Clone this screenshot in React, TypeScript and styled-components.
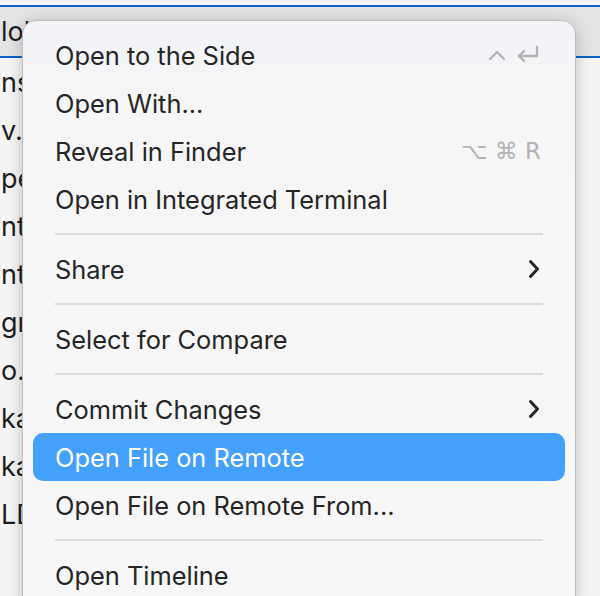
import React from "react";
import styled, { createGlobalStyle } from "styled-components";

// styles
const GlobalStyle = createGlobalStyle`
  html, body {
    margin: 0;
    padding: 0;
    background: #f4f4f4;
    font-family: Inter, "Noto Sans", "DejaVu Sans", sans-serif;
    -webkit-font-smoothing: antialiased;
  }
`;

const Screen = styled.div`
  position: relative;
  width: 600px;
  height: 596px;
  overflow: hidden;
  background: #f5f5f5;
  padding-top: 5px;
  box-sizing: border-box;
`;

const ExplorerRow = styled.div<{ $focused?: boolean }>`
  display: flex;
  align-items: center;
  height: ${(p) => (p.$focused ? "53px" : "48px")};
  padding-left: 1px;
  font-size: 27px;
  color: #1f1f1f;
  white-space: nowrap;
  box-sizing: border-box;
  background: ${(p) => (p.$focused ? "#e4e4e4" : "transparent")};
  border-top: ${(p) => (p.$focused ? "2px solid #0a63c7" : "none")};
  border-bottom: ${(p) => (p.$focused ? "2px solid #0a63c7" : "none")};
`;

const Menu = styled.div`
  position: absolute;
  top: 20px;
  left: 22px;
  width: 554px;
  padding: 10px 10px 10px;
  box-sizing: border-box;
  border-radius: 14px;
  border: 1px solid #bdbdbd;
  background: linear-gradient(180deg, #f1f3f7 0px, #f6f6f7 70px, #f7f7f7 100%);
  box-shadow: 0 0 14px rgba(0, 0, 0, 0.12), 0 6px 20px rgba(0, 0, 0, 0.1);
  font-family: Inter, "Noto Sans", "DejaVu Sans", sans-serif;
`;

const Item = styled.div<{ $active?: boolean }>`
  display: flex;
  align-items: center;
  justify-content: space-between;
  height: 48px;
  padding: 0 24px 0 22px;
  border-radius: 10px;
  font-size: 25.4px;
  color: ${(p) => (p.$active ? "#ffffff" : "#262626")};
  background: ${(p) => (p.$active ? "#44a0fd" : "transparent")};
`;

const Separator = styled.div`
  height: 22px;
  display: flex;
  align-items: center;
  padding: 0 22px 0 22px;

  &::after {
    content: "";
    flex: 1;
    height: 2px;
    background: #dcdcdc;
  }
`;

const Shortcut = styled.span`
  display: flex;
  align-items: center;
  gap: 8px;
  color: #b3b3b3;
  font-size: 23px;
  font-family: "DejaVu Sans", Inter, sans-serif;
`;

const Chevron = styled.svg`
  width: 12px;
  height: 20px;
  margin-right: 1px;
`;

// data
type Entry =
  | { kind: "item"; label: string; shortcut?: React.ReactNode; submenu?: boolean; active?: boolean }
  | { kind: "sep" };

const ReturnIcon = () => (
  <svg width="26" height="22" viewBox="0 0 26 22" fill="none" stroke="#b3b3b3" strokeWidth="2.4" strokeLinecap="round" strokeLinejoin="round">
    <path d="M22 3 V12 H4" />
    <path d="M9 7 L4 12 L9 17" />
  </svg>
);

const CaretIcon = () => (
  <svg width="20" height="14" viewBox="0 0 20 14" fill="none" stroke="#b3b3b3" strokeWidth="2.4" strokeLinecap="round" strokeLinejoin="round">
    <path d="M3 11 L10 4 L17 11" />
  </svg>
);

const entries: Entry[] = [
  {
    kind: "item",
    label: "Open to the Side",
    shortcut: (
      <>
        <CaretIcon />
        <ReturnIcon />
      </>
    ),
  },
  { kind: "item", label: "Open With..." },
  { kind: "item", label: "Reveal in Finder", shortcut: "⌥ ⌘ R" },
  { kind: "item", label: "Open in Integrated Terminal" },
  { kind: "sep" },
  { kind: "item", label: "Share", submenu: true },
  { kind: "sep" },
  { kind: "item", label: "Select for Compare" },
  { kind: "sep" },
  { kind: "item", label: "Commit Changes", submenu: true },
  { kind: "item", label: "Open File on Remote", active: true },
  { kind: "item", label: "Open File on Remote From..." },
  { kind: "sep" },
  { kind: "item", label: "Open Timeline" },
];

const explorerNames = ["lolkat", "ns", "v.c", "pe", "nt", "nt", "gr", "o.", "ka", "ka", "LD"];

// component
const App: React.FC = () => {
  return (
    <Screen>
      <GlobalStyle />
      {explorerNames.map((name, i) => (
        <ExplorerRow key={i} $focused={i === 0}>
          {name}
        </ExplorerRow>
      ))}
      <Menu>
        {entries.map((entry, i) =>
          entry.kind === "sep" ? (
            <Separator key={i} />
          ) : (
            <Item key={i} $active={entry.active}>
              <span>{entry.label}</span>
              {entry.shortcut && <Shortcut>{entry.shortcut}</Shortcut>}
              {entry.submenu && (
                <Chevron viewBox="0 0 12 20" fill="none" stroke="#262626" strokeWidth="3" strokeLinecap="round" strokeLinejoin="round">
                  <path d="M2.5 2.5 L9.5 10 L2.5 17.5" />
                </Chevron>
              )}
            </Item>
          )
        )}
      </Menu>
    </Screen>
  );
};

export default App;
